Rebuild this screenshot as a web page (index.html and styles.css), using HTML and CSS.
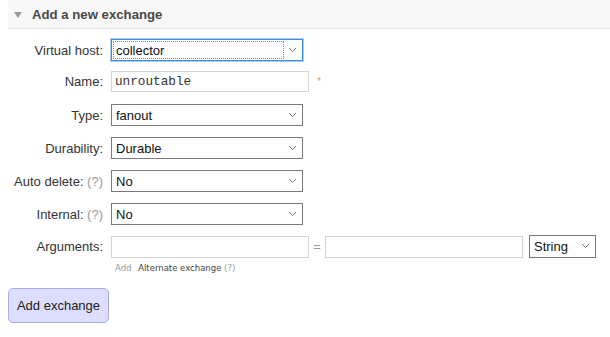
FILE: index.html
```html
<!DOCTYPE html>
<html lang="en">
<head>
    <meta charset="UTF-8">
    <title>Add a new exchange</title>
    <link rel="stylesheet" href="styles.css">
</head>
<body>
<div class="section">
    <div class="section-header">
        <span class="arrow"></span>
        Add a new exchange
    </div>

    <form class="exchange-form">
        <div class="form-row row-vhost">
            <label class="form-label">Virtual host:</label>
            <div class="select-wrap focused">
                <select class="form-select">
                    <option>collector</option>
                </select>
                <span class="focus-ring"></span>
                <svg class="chevron" width="9" height="6" viewBox="0 0 9 6"><path d="M1 1 L4.5 4.5 L8 1" fill="none" stroke="#777" stroke-width="1"/></svg>
            </div>
        </div>

        <div class="form-row row-name">
            <label class="form-label">Name:</label>
            <input type="text" class="form-input mono" value="unroutable">
            <span class="mandatory">*</span>
        </div>

        <div class="form-row">
            <label class="form-label">Type:</label>
            <div class="select-wrap">
                <select class="form-select">
                    <option>fanout</option>
                </select>
                <svg class="chevron" width="9" height="6" viewBox="0 0 9 6"><path d="M1 1 L4.5 4.5 L8 1" fill="none" stroke="#777" stroke-width="1"/></svg>
            </div>
        </div>

        <div class="form-row">
            <label class="form-label">Durability:</label>
            <div class="select-wrap">
                <select class="form-select">
                    <option>Durable</option>
                </select>
                <svg class="chevron" width="9" height="6" viewBox="0 0 9 6"><path d="M1 1 L4.5 4.5 L8 1" fill="none" stroke="#777" stroke-width="1"/></svg>
            </div>
        </div>

        <div class="form-row">
            <label class="form-label">Auto delete: <span class="help">(?)</span></label>
            <div class="select-wrap">
                <select class="form-select">
                    <option>No</option>
                </select>
                <svg class="chevron" width="9" height="6" viewBox="0 0 9 6"><path d="M1 1 L4.5 4.5 L8 1" fill="none" stroke="#777" stroke-width="1"/></svg>
            </div>
        </div>

        <div class="form-row">
            <label class="form-label">Internal: <span class="help">(?)</span></label>
            <div class="select-wrap">
                <select class="form-select">
                    <option>No</option>
                </select>
                <svg class="chevron" width="9" height="6" viewBox="0 0 9 6"><path d="M1 1 L4.5 4.5 L8 1" fill="none" stroke="#777" stroke-width="1"/></svg>
            </div>
        </div>

        <div class="form-row row-args">
            <label class="form-label">Arguments:</label>
            <div class="args">
                <div class="args-line">
                    <input type="text" class="form-input">
                    <span class="equals">=</span>
                    <input type="text" class="form-input">
                    <div class="select-wrap small">
                        <select class="form-select">
                            <option>String</option>
                        </select>
                        <svg class="chevron" width="9" height="6" viewBox="0 0 9 6"><path d="M1 1 L4.5 4.5 L8 1" fill="none" stroke="#777" stroke-width="1"/></svg>
                    </div>
                </div>
                <div class="args-help">
                    <span class="add">Add</span>
                    <span class="arg-link">Alternate exchange</span> <span class="help">(?)</span>
                </div>
            </div>
        </div>

        <button type="button" class="add-button">Add exchange</button>
    </form>
</div>
</body>
</html>
```

FILE: styles.css
```css
* {
    margin: 0;
    padding: 0;
    box-sizing: border-box;
}

body {
    font-family: "Liberation Sans", Arial, sans-serif;
    font-size: 13px;
    color: #333;
    background: white;
    padding: 0 0 0 8px;
}

.section-header {
    display: flex;
    align-items: center;
    gap: 10px;
    height: 29px;
    padding-left: 6px;
    padding-top: 1px;
    background: #f8f8f8;
    border-bottom: 1px solid #e4e4e4;
    font-weight: bold;
    font-size: 13.2px;
    color: #484848;
}

.arrow {
    width: 0;
    height: 0;
    border-left: 4px solid transparent;
    border-right: 4px solid transparent;
    border-top: 6px solid #999;
}

.exchange-form {
    padding-top: 10px;
}

.form-row {
    display: flex;
    align-items: center;
    height: 22px;
    margin-bottom: 11px;
}

.row-vhost {
    margin-bottom: 9px;
}

.row-name {
    margin-bottom: 12px;
}

.row-args {
    align-items: flex-start;
    height: auto;
    margin-top: -1px;
    margin-bottom: 0;
}

.form-label {
    width: 95px;
    text-align: right;
    margin-right: 8px;
    white-space: nowrap;
    flex-shrink: 0;
}

.row-args .form-label {
    line-height: 24px;
}

.help {
    color: #999;
}

.select-wrap {
    position: relative;
    width: 192px;
    height: 22px;
}

.select-wrap.small {
    width: 67px;
    height: 23px;
    margin-left: 6px;
}

.form-select {
    appearance: none;
    -webkit-appearance: none;
    width: 100%;
    height: 100%;
    border: 1px solid #7a7a7a;
    background: white;
    font-family: "Liberation Sans", Arial, sans-serif;
    font-size: 13px;
    color: #111;
    padding: 0 0 0 4px;
    outline: none;
}

.focused .form-select {
    border-color: #3d8ee0;
    box-shadow: 0 0 0 1px #a9cdf2;
}

.focus-ring {
    position: absolute;
    left: 2px;
    top: 2px;
    bottom: 2px;
    right: 19px;
    border: 1px dotted #888;
    pointer-events: none;
}

.chevron {
    position: absolute;
    right: 6px;
    top: 8px;
    pointer-events: none;
}

.form-input {
    width: 198px;
    height: 22px;
    border: 1px solid #d4d4d4;
    background: white;
    font-family: "Liberation Sans", Arial, sans-serif;
    font-size: 13px;
    color: #333;
    padding: 0 3px;
    outline: none;
}

.form-input.mono {
    font-family: "Liberation Mono", "Courier New", monospace;
    font-size: 12.7px;
    height: 21px;
}

.mandatory {
    color: #e8a357;
    font-size: 11px;
    margin-left: 8px;
    align-self: flex-start;
    margin-top: 5px;
}

.args-line {
    display: flex;
    align-items: center;
}

.equals {
    color: #999;
    width: 16px;
    text-align: center;
}

.args-help {
    font-family: "DejaVu Sans", Verdana, sans-serif;
    font-size: 8.5px;
    padding: 5px 0 0 4px;
}

.add {
    color: #999;
    margin-right: 4px;
}

.arg-link {
    color: #444;
}

.add-button {
    display: block;
    margin-top: 15px;
    width: 101px;
    height: 35px;
    background: #ddddff;
    border: 1px solid #aaaaee;
    border-radius: 5px;
    font-family: "Liberation Sans", Arial, sans-serif;
    font-size: 13px;
    color: #222;
}
```
